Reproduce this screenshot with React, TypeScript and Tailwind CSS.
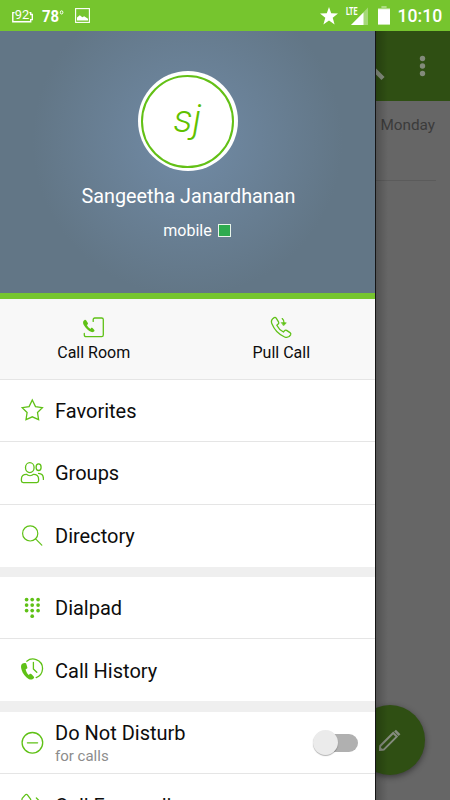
import type { ReactNode } from "react"

const stroke = {
  fill: "none",
  stroke: "#5fc116",
  strokeWidth: 1.3,
  strokeLinecap: "round",
  strokeLinejoin: "round",
} as const

const HANDSET =
  "M4.6 1.2C2.3 2.6 1.2 4.8 2.2 7.2C4.6 13.2 9.2 18.2 15 20.6C17.4 21.6 19.8 20.4 21 18.4C21.5 17.5 21.2 16.8 20.4 16.2L17 14C16.2 13.5 15.4 13.7 14.8 14.4L13.8 15.6C10.8 14 8.6 11.6 7.2 8.8L8.6 7.6C9.3 7 9.4 6.2 8.9 5.4L6.6 1.7C6.1 1 5.4 .8 4.6 1.2Z"

function StarIcon() {
  return (
    <svg width="24" height="24" viewBox="0 0 24 24" {...stroke} strokeLinejoin="miter">
      <path d="M12.3 2L15.5 8.6L22.4 9.6L17.5 14.5L18.6 21.6L12.3 18.8L6 21.6L7.1 14.5L2.2 9.6L9.1 8.6Z" />
    </svg>
  )
}

function GroupsIcon() {
  return (
    <svg width="24" height="24" viewBox="0 0 24 24" {...stroke}>
      <ellipse cx="9.8" cy="6.6" rx="4.3" ry="5" />
      <ellipse cx="18.6" cy="6.2" rx="2.5" ry="3.3" />
      <path d="M6.4 13.3C3.4 13.3 1.4 14.8 1.4 18V19.8C1.4 21.1 2 21.6 3.2 21.6H16.8C18 21.6 18.6 21.1 18.6 19.8V18C18.6 14.8 16.6 13.3 13.6 13.3C11.6 15 8.4 15 6.4 13.3Z" />
      <path d="M18.6 12.4C21.8 12.6 23.6 14.8 23.4 18.4" />
    </svg>
  )
}

function SearchIcon() {
  return (
    <svg width="24" height="24" viewBox="0 0 24 24" {...stroke} strokeWidth="1.2">
      <circle cx="10.2" cy="9.4" r="7.6" />
      <path d="M15.6 14.9L21.8 21.1" />
    </svg>
  )
}

function DialpadIcon() {
  const dots = [6.6, 12.2, 18.1].flatMap((x) => [3.6, 9.1, 14.6].map((y) => [x, y]))
  return (
    <svg width="24" height="24" viewBox="0 0 24 24" fill="#5fc116">
      {[...dots, [12.2, 20.2]].map(([x, y]) => (
        <circle key={`${x}-${y}`} cx={x} cy={y} r="1.85" />
      ))}
    </svg>
  )
}

function HistoryIcon() {
  return (
    <svg width="24" height="24" viewBox="0 0 24 24" {...stroke}>
      <path d="M6.8 3.2C9.3 1.1 12.9 .4 16.1 1.6C20.2 3.1 22.8 7 22.5 11.3C22.2 15.2 19.8 18.3 16.2 19.6" />
      <path d="M13.4 4.4V11L16.8 14.3" />
      <path
        d="M2.2 5.8C.8 6.9 .8 9 1.5 11.5C2.6 15.5 5.5 19.3 8.6 20.9C10.5 21.9 12.6 21.7 13.8 20.3C14.3 19.8 14.2 19.2 13.7 18.6L11.6 16.2C11 15.5 10.3 15.5 9.7 16.1L8.8 16.9C7.2 15.7 6.1 13.5 5.6 11.4L6.6 10.8C7.3 10.4 7.5 9.9 7.3 9.2L6.4 6.2C6.2 5.4 5.6 5.1 4.8 5.1C3.8 5.1 2.9 5.2 2.2 5.8Z"
        fill="#5fc116"
        stroke="none"
      />
    </svg>
  )
}

function DoNotDisturbIcon() {
  return (
    <svg width="24" height="24" viewBox="0 0 24 24" {...stroke}>
      <circle cx="12.4" cy="11.8" r="10.3" />
      <path d="M7.4 11.8H17.6" />
    </svg>
  )
}

function ForwardIcon() {
  return (
    <svg width="24" height="24" viewBox="0 0 24 24" {...stroke}>
      <path d="M2.2 5.4L5.3 1.9C5.9 1.1 6.8 1.1 7.4 1.9L10.4 5.8C10.9 6.6 10.8 7.2 10.2 7.8L8.6 9.4C10 12 12 14 14.4 15.4L16 13.8C16.6 13.2 17.4 13.1 18 13.6L21.4 16.2C22 16.8 22 17.5 21.4 18.2C18.6 22.4 14 21.6 9.6 18.2C5 14.6 .8 9.6 2.2 5.4Z" />
      <path d="M12 8.6H20M16.4 5L20 8.6L16.4 12.2" />
    </svg>
  )
}

function CallRoomIcon() {
  return (
    <svg width="24" height="24" viewBox="0 0 24 24" {...stroke}>
      <path d="M11.2 5.4V3.6C11.2 2.5 11.8 2 12.8 2H19.6C20.7 2 21.3 2.6 21.3 3.6V19C21.3 20.1 20.7 20.7 19.6 20.7H4C2.9 20.7 2.3 20.1 2.3 19V17.5" />
      <path
        d="M1.5 5C.8 6 1 7.6 1.8 9C3.6 12.2 6.4 14.9 9.6 16C10.7 16.4 11.9 16 12.4 15.1C12.7 14.6 12.6 14.1 12.1 13.7L10.5 12.1C9.9 11.6 9.3 11.7 8.9 12.2L8.4 12.9C6.8 12 5.6 10.6 4.8 9.1L5.6 8.4C6.1 8 6.1 7.4 5.7 6.8L4.1 4.3C3.7 3.7 3.2 3.5 2.6 3.9C2.1 4.1 1.8 4.5 1.5 5Z"
        fill="#5fc116"
        stroke="none"
      />
    </svg>
  )
}

function PullCallIcon() {
  return (
    <svg width="24" height="24" viewBox="0 0 24 24" {...stroke}>
      <path d={HANDSET} transform="translate(.6 .4)" />
      <path d="M13.2 2.6C14.6 3.8 15.2 5.4 15 7.2" />
      <path d="M12.5 6.6L17.3 6.8L14.8 9.6Z" fill="#5fc116" strokeWidth="0.6" />
    </svg>
  )
}

function StatusBar() {
  return (
    <header className="flex h-[31px] items-center bg-[#76c52e] text-white">
      <svg className="ml-3 shrink-0 overflow-visible" width="21" height="16" viewBox="0 0 21 16">
        <path d="M2.6 4.6H.8V13.7H18.7V11.6H20.3V6.5H18.7V4.6H17.4" fill="none" stroke="#fff" strokeWidth="1.4" />
        <text x="2.8" y="11.2" fill="#fff" fontFamily="Roboto, sans-serif" fontSize="13.5" textLength="14.5" lengthAdjust="spacingAndGlyphs">
          92
        </text>
      </svg>
      <svg className="ml-[9px] shrink-0 overflow-visible" width="22" height="16" viewBox="0 0 22 16">
        <text x="0" y="13.8" fill="#fff" fontFamily="Roboto, sans-serif" fontWeight="700" fontSize="16" textLength="17" lengthAdjust="spacingAndGlyphs">
          78
        </text>
        <ellipse cx="19.6" cy="4.4" rx="1.3" ry="1.6" fill="none" stroke="#fff" />
      </svg>
      <svg className="ml-[11px] shrink-0" width="15" height="15" viewBox="0 0 15 15">
        <rect x=".6" y=".6" width="13.8" height="13.8" fill="none" stroke="#fff" strokeWidth="1.1" />
        <path d="M2 12.4V9.6L4.8 7.3L7.3 9.3L9.2 8.3L13 10.8V12.4Z" fill="#fff" />
      </svg>
      <div className="ml-auto flex items-center">
        <svg width="18" height="18" viewBox="0 0 18 18" fill="#fff">
          <path d="M9 0L11.2 6.2L18 6.6L12.7 10.7L14.6 17.4L9 13.6L3.4 17.4L5.3 10.7L0 6.6L6.8 6.2Z" />
        </svg>
        <svg className="ml-2 overflow-visible" width="22" height="20" viewBox="0 0 22 20">
          <path d="M22 1.5V19H5Z" fill="#fff" opacity=".35" />
          <path d="M17.5 6.5V19H5Z" fill="#fff" />
          <text x="0" y="9" fill="#fff" fontFamily="Roboto, sans-serif" fontWeight="700" fontSize="10.5" textLength="11.5" lengthAdjust="spacingAndGlyphs">
            LTE
          </text>
        </svg>
        <svg className="ml-[10px]" width="12" height="19" viewBox="0 0 12 19">
          <path d="M3.4 0H8.6V2H12V4H0V2H3.4Z" fill="#fff" opacity=".4" />
          <path d="M0 3.2H12V18.6H0Z" fill="#fff" />
        </svg>
        <span className="mr-2 ml-[7.5px] w-[44.5px] pt-px text-[17.6px] leading-[30px] font-medium">10:10</span>
      </div>
    </header>
  )
}

function Backdrop() {
  return (
    <main className="h-[769px] bg-[#666666]">
      <div className="flex h-[70px] items-center justify-end bg-[#2f4f13] text-[#878f80]">
        <svg width="34" height="34" viewBox="0 0 34 34" fill="none" stroke="currentColor">
          <circle cx="13" cy="12.5" r="8" strokeWidth="3.4" />
          <path d="M18.5 18L30 29.5" strokeWidth="4.4" />
        </svg>
        <svg className="mr-6 ml-8" width="7" height="22" viewBox="0 0 7 22" fill="#838b7b">
          <circle cx="3.5" cy="3.5" r="2.7" />
          <circle cx="3.5" cy="11" r="2.7" />
          <circle cx="3.5" cy="18.5" r="2.7" />
        </svg>
      </div>
      <div className="mr-[14px] h-[79.5px] border-b border-[#5b5b5b] pt-[13.5px] pr-px text-right text-[15.3px] leading-5 text-[#3b3b3b]">
        Monday
      </div>
    </main>
  )
}

function ComposeButton() {
  return (
    <button className="absolute right-[25.5px] bottom-[25px] flex size-[70px] items-center justify-center rounded-full bg-[#2f4f13] shadow-[0_2px_6px_rgba(0,0,0,0.45)]">
      <svg width="24" height="24" viewBox="0 0 24 24" fill="none" stroke="#858c7e" strokeWidth="2">
        <path d="M2 22L2.2 18L15.2 5L18.8 8.6L5.8 21.6Z" />
        <path d="M17 2.7L21.5 7.2" strokeWidth="2.6" />
        <path d="M1.4 22.6L1.6 18.5L5.5 22.3Z" fill="#858c7e" stroke="none" />
      </svg>
    </button>
  )
}

function Profile() {
  return (
    <section className="flex h-[267.5px] w-[375px] flex-col items-center border-b-[6px] border-[#76c52e] bg-[#627686] bg-[radial-gradient(circle_at_50%_42%,#718ba6_0px,#627686_155px)] pt-10 text-white">
      <div className="flex size-[100px] items-center justify-center rounded-full bg-white">
        <div className="flex size-[93px] items-center justify-center rounded-full border-[2.5px] border-[#63c016] pb-1 text-[39px] leading-none font-light text-[#5fc100] italic">
          sj
        </div>
      </div>
      <h1 className="mt-3 ml-[2px] text-[19.8px] leading-7">Sangeetha Janardhanan</h1>
      <div className="mt-[9.5px] ml-[19px] flex items-center gap-[6px] text-[16px] leading-5">
        mobile
        <span className="size-[13px] border border-[#e8f4ea] bg-[#2eab4f]" />
      </div>
    </section>
  )
}

function Action({ icon, label }: { icon: ReactNode; label: string }) {
  return (
    <button className="flex flex-1 flex-col items-center pt-[17px] text-[16px] leading-6 text-[#0d0d0d]">
      {icon}
      <span className="mt-px">{label}</span>
    </button>
  )
}

type ItemProps = {
  icon: ReactNode
  label: string
  note?: string
  last?: boolean
  children?: ReactNode
}

function Item({ icon, label, note, last, children }: ItemProps) {
  return (
    <li
      className={`flex items-center pr-[17px] pl-5 ${last ? "h-[62px]" : "h-[62.5px] border-b border-[#e5e5e5]"}`}
    >
      <span className="mr-[11px]">{icon}</span>
      <div className={note ? "pt-[3px]" : "pt-px"}>
        <div className="text-[20px] leading-6 text-[#0d0d0d]">{label}</div>
        {note && <div className="text-[15px] leading-[23px] text-[#8c8c8c]">{note}</div>}
      </div>
      {children}
    </li>
  )
}

function Toggle() {
  return (
    <span className="relative ml-auto flex h-[27px] w-[45px] items-center justify-end">
      <span className="h-[18px] w-[34px] rounded-full bg-[#b0b0b0]" />
      <span className="absolute top-[1px] left-0 size-[25px] rounded-full bg-[#ebebeb] shadow-[0_1px_1px_rgba(0,0,0,0.3)]" />
    </span>
  )
}

function Drawer() {
  return (
    <aside className="absolute top-[31px] bottom-0 left-0 w-[376px] overflow-hidden border-r border-[#151515] bg-[#efefef]">
      <Profile />
      <div className="flex h-[81px] border-b border-[#e5e5e5] bg-[#f8f8f8]">
        <Action icon={<CallRoomIcon />} label="Call Room" />
        <Action icon={<PullCallIcon />} label="Pull Call" />
      </div>
      <ul className="bg-white">
        <Item icon={<StarIcon />} label="Favorites" />
        <Item icon={<GroupsIcon />} label="Groups" />
        <Item icon={<SearchIcon />} label="Directory" last />
      </ul>
      <ul className="mt-[10.4px] bg-white">
        <Item icon={<DialpadIcon />} label="Dialpad" />
        <Item icon={<HistoryIcon />} label="Call History" last />
      </ul>
      <ul className="mt-[10.4px] bg-white">
        <Item icon={<DoNotDisturbIcon />} label="Do Not Disturb" note="for calls">
          <Toggle />
        </Item>
        <Item icon={<ForwardIcon />} label="Call Forwarding" />
      </ul>
    </aside>
  )
}

export default function App() {
  return (
    <div className="relative h-[800px] w-[450px] overflow-hidden font-['Roboto',sans-serif]">
      <StatusBar />
      <Backdrop />
      <ComposeButton />
      <div className="absolute top-[31px] bottom-0 left-[376px] w-3 bg-linear-to-r from-black/20 to-transparent" />
      <Drawer />
    </div>
  )
}
